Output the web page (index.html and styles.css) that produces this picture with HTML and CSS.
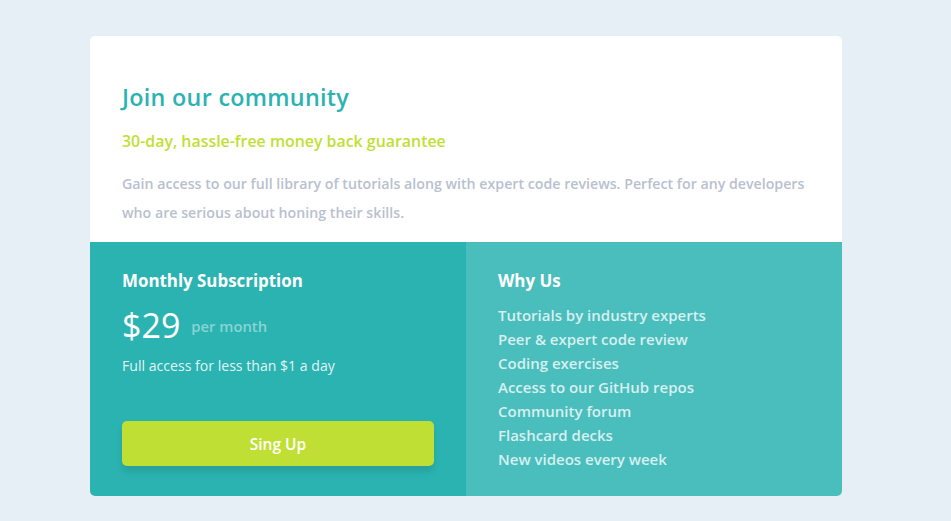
FILE: index.html
```html
<!DOCTYPE html>
<html lang="en">
<head>
<meta charset="utf-8">
<title>Join our community</title>
<link rel="stylesheet" href="styles.css">
</head>
<body>
<main class="card">
  <section class="intro">
    <h1 class="title">Join our community</h1>
    <p class="guarantee">30-day, hassle-free money back guarantee</p>
    <p class="desc">Gain access to our full library of tutorials along with expert code reviews. Perfect for any developers who are serious about honing their skills.</p>
  </section>
  <div class="bottom">
    <section class="sub">
      <h2 class="sub-title">Monthly Subscription</h2>
      <div class="price"><span class="amount">$29</span><span class="per">per month</span></div>
      <p class="access">Full access for less than $1 a day</p>
      <button class="btn">Sing Up</button>
    </section>
    <section class="why">
      <h2 class="sub-title">Why Us</h2>
      <ul class="list">
        <li>Tutorials by industry experts</li>
        <li>Peer &amp; expert code review</li>
        <li>Coding exercises</li>
        <li>Access to our GitHub repos</li>
        <li>Community forum</li>
        <li>Flashcard decks</li>
        <li>New videos every week</li>
      </ul>
    </section>
  </div>
</main>
</body>
</html>
```
FILE: styles.css
```css
* { box-sizing: border-box; }
html, body { margin: 0; padding: 0; }
body {
  background: #e6eef6;
  font-family: "Open Sans", "Lato", sans-serif;
  height: 521px;
  overflow: hidden;
}
.card {
  width: 752px;
  margin: 36px 0 0 90px;
  border-radius: 5px;
  overflow: hidden;
  background: #fff;
}
.intro {
  height: 206px;
  padding: 48px 32px 0 32px;
}
.title {
  margin: 0;
  font-size: 23.3px;
  line-height: 26px;
  font-weight: 600;
  color: #2bb3b1;
  letter-spacing: 0.3px;
}
.guarantee {
  margin: 21px 0 0;
  font-size: 15.9px;
  line-height: 20px;
  font-weight: 600;
  color: #c0df34;
}
.desc {
  margin: 18px 0 0;
  font-size: 14.2px;
  line-height: 29px;
  font-weight: 600;
  color: #b9c0cf;
}
.bottom {
  display: grid;
  grid-template-columns: 1fr 1fr;
  grid-template-rows: 254px;
  height: 254px;
}
.sub {
  background: #2bb3b1;
  padding: 28px 32px 30px;
  display: flex;
  flex-direction: column;
}
.why {
  background: #4abebd;
  padding: 28px 32px 0;
}
.sub-title {
  margin: 0;
  font-size: 16.9px;
  line-height: 22px;
  font-weight: 700;
  color: #fff;
}
.price {
  display: flex;
  align-items: center;
  margin-top: 13px;
  height: 40px;
}
.amount {
  font-size: 34px;
  line-height: 40px;
  color: #fff;
  font-weight: 400;
}
.per {
  margin-left: 11px;
  margin-top: 2px;
  font-size: 14.8px;
  color: rgba(255,255,255,0.45);
  font-weight: 600;
}
.access {
  margin: 11px 0 0;
  font-size: 14.1px;
  line-height: 20px;
  color: rgba(255,255,255,0.88);
}
.btn {
  margin-top: auto;
  flex: none;
  height: 45px;
  width: 100%;
  border: 0;
  border-radius: 5px;
  background: #c0df34;
  color: #fff;
  font-family: inherit;
  font-size: 15.5px;
  font-weight: 600;
  box-shadow: 0 6px 6px rgba(0,0,0,0.1);
}
.list {
  list-style: none;
  margin: 11px 0 0;
  padding: 0;
}
.list li {
  font-size: 15px;
  line-height: 24px;
  font-weight: 600;
  color: rgba(255,255,255,0.78);
}
```
